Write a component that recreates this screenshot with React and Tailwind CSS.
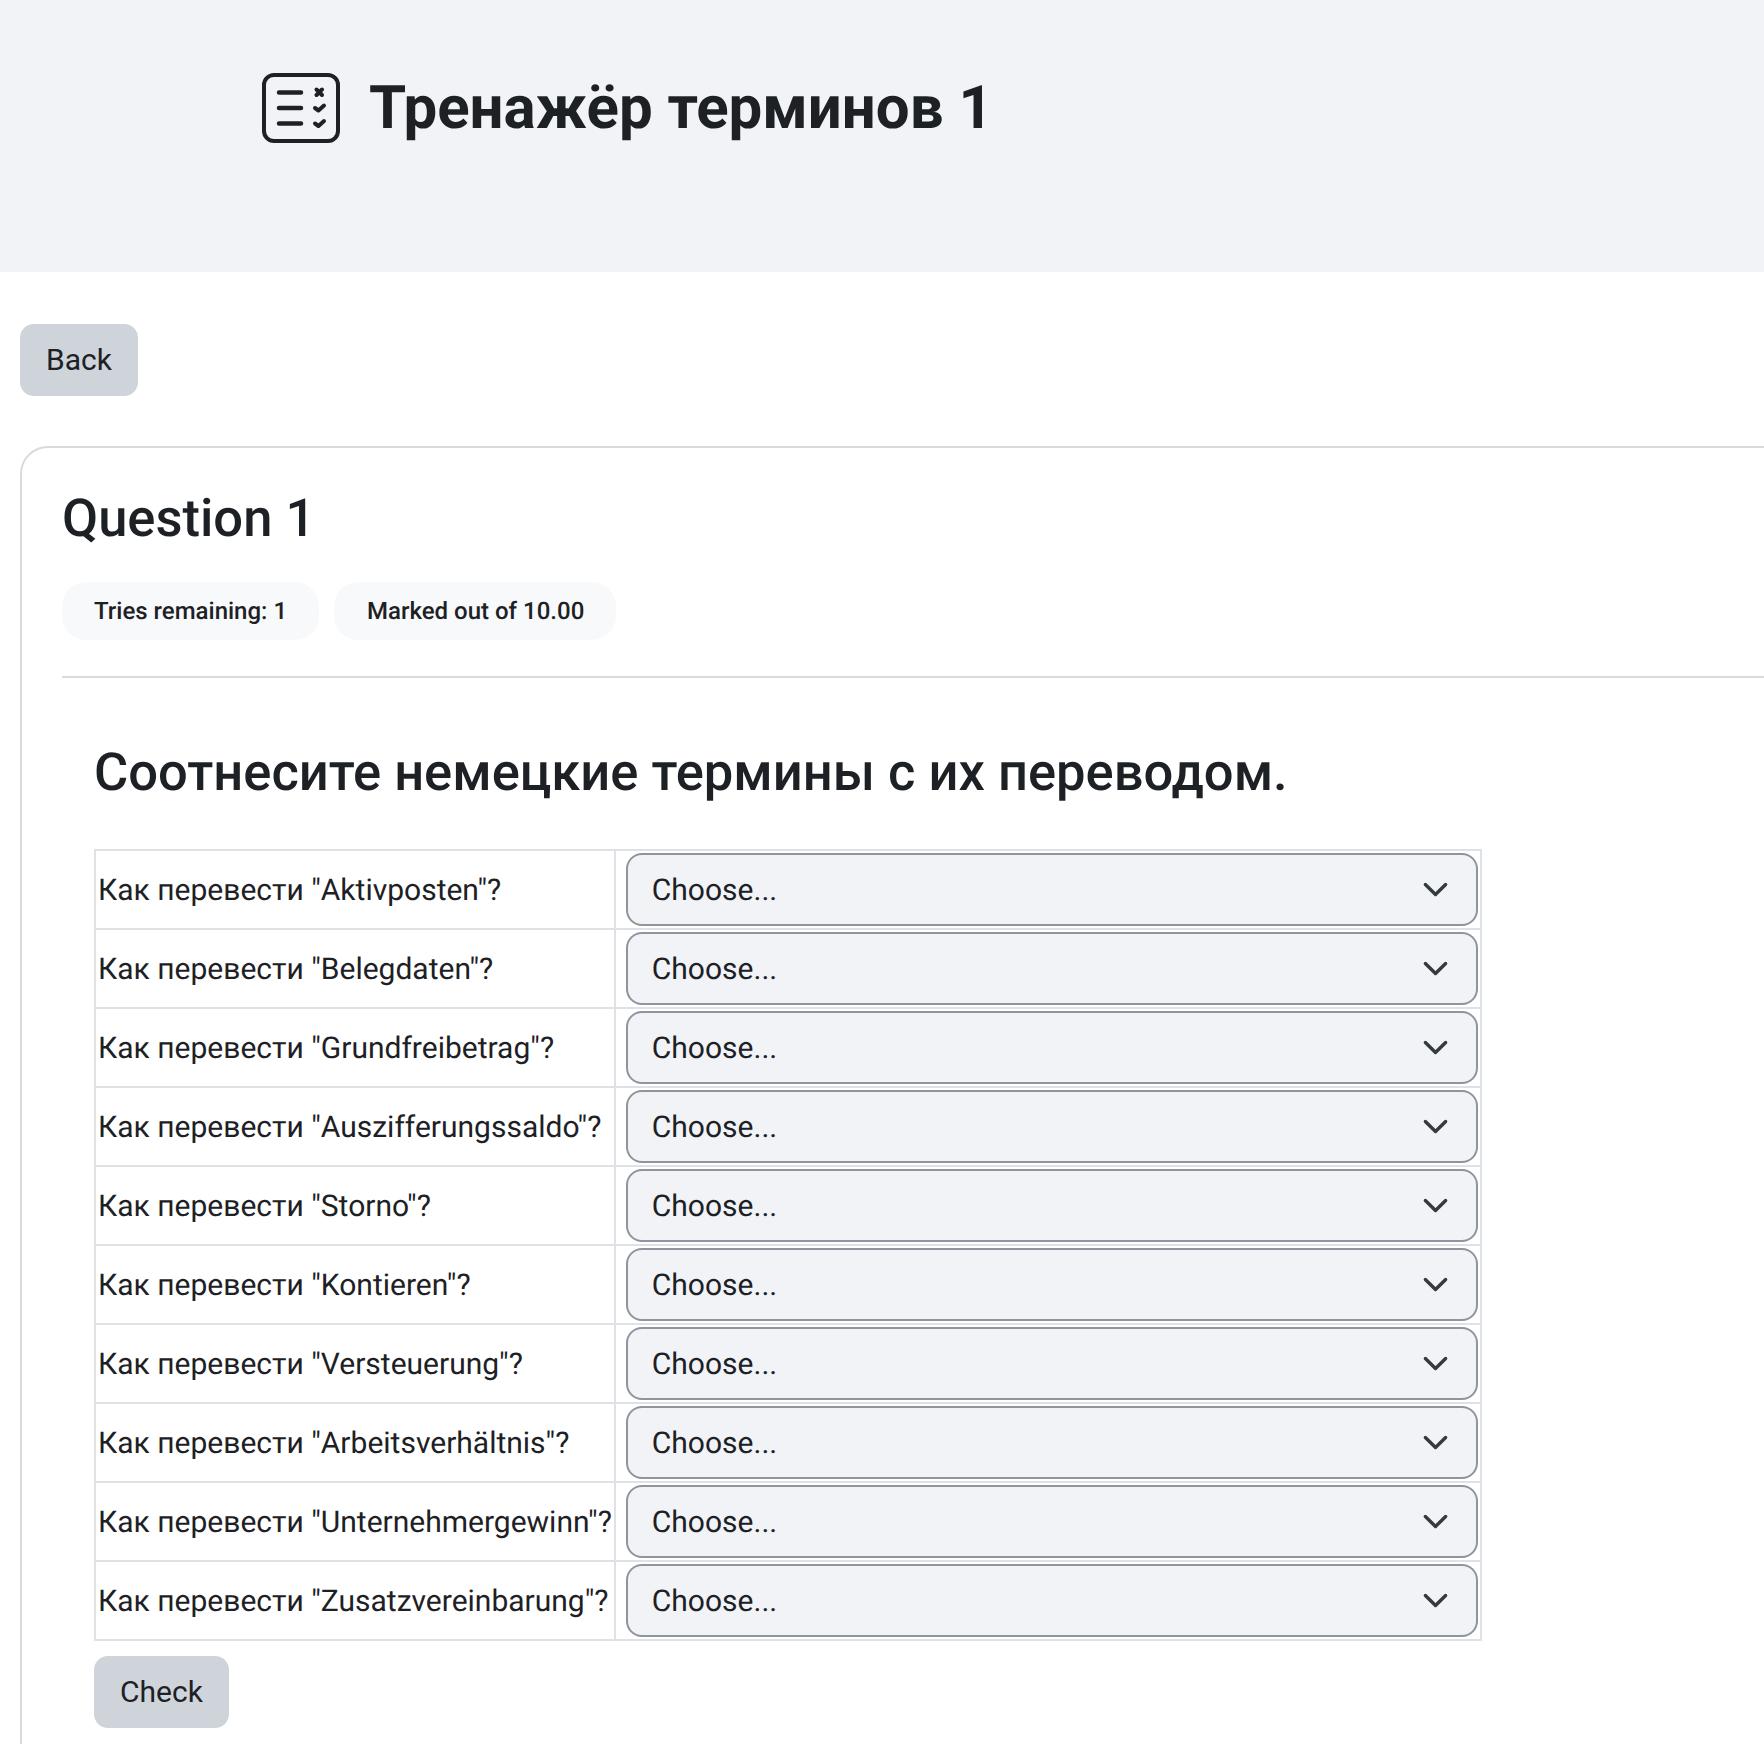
import React from 'react';

const terms = [
  'Aktivposten',
  'Belegdaten',
  'Grundfreibetrag',
  'Auszifferungssaldo',
  'Storno',
  'Kontieren',
  'Versteuerung',
  'Arbeitsverhältnis',
  'Unternehmergewinn',
  'Zusatzvereinbarung',
];

const QuizIcon = () => (
  <svg width="78" height="70" viewBox="0 0 78 70" fill="none" stroke="#1d2125" strokeLinecap="round" strokeLinejoin="round">
    <rect x="2" y="2" width="74" height="66" rx="10" strokeWidth="4" />
    <path d="M17 19.500h22M17 35h22M17 50.500h22" strokeWidth="4.500" />
    <path d="M54.500 16.500l5.500 5.500M60 16.500l-5.500 5.500" strokeWidth="4" />
    <path d="M53 35l3.500 2.500 5.500-5M53 50.500l3.500 2.500 5.500-5" strokeWidth="4" />
  </svg>
);

const Chevron = () => (
  <svg className="mt-[1px]" width="27" height="27" viewBox="0 0 16 16" fill="none" stroke="#343a40" strokeWidth="2" strokeLinecap="round" strokeLinejoin="round">
    <path d="m2 5 6 6 6-6" />
  </svg>
);

const Btn = ({ children }) => (
  <button className="h-[72px] px-[26px] pb-[2px] rounded-[14px] bg-[#ced4da] text-[30px] text-[#1d2125]">{children}</button>
);

export default function App() {
  return (
    <div className="h-[1744px] w-[1764px] overflow-hidden bg-white text-[#1d2125] font-['Roboto',sans-serif] [text-rendering:geometricPrecision]">
      <header className="h-[272px] bg-[#f1f3f7] pl-[262px] pt-[73px]">
        <div className="flex items-center gap-[29px]">
          <QuizIcon />
          <h1 className="text-[60px] font-bold leading-none">Тренажёр терминов 1</h1>
        </div>
      </header>

      <div className="pl-[20px] pt-[52px]">
        <Btn>Back</Btn>

        <section className="mt-[50px] w-[1800px] min-h-[1400px] border-2 border-[#d9dadc] rounded-tl-[28px] pl-[40px] pt-[37px]">
          <h2 className="text-[52.500px] font-medium leading-[66px]">Question 1</h2>
          <div className="mt-[31px] flex gap-[15px]">
            <span className="h-[58px] px-[32px] rounded-[24px] bg-[#f8f9fa] flex items-center text-[24px] font-medium">Tries remaining: 1</span>
            <span className="h-[58px] pl-[33px] pr-[32px] rounded-[24px] bg-[#f8f9fa] flex items-center text-[24px] font-medium">Marked out of 10.00</span>
          </div>
          <div className="mt-[36px] border-t-2 border-[#d9dadc]"></div>

          <div className="pl-[32px]">
            <h3 className="mt-[61px] text-[52.500px] font-medium leading-[66px]">Соотнесите немецкие термины с их переводом.</h3>

            <table className="mt-[44px] w-[1388px] border-collapse border-2 border-[#dee2e6] text-[30px]">
              <tbody>
                {terms.map((term) => (
                  <tr key={term} className="h-[79px]">
                    <td className="w-[519px] border-2 border-[#dee2e6] px-[2px] pt-[2px] whitespace-nowrap">Как перевести "{term}"?</td>
                    <td className="border-2 border-[#dee2e6] pl-[10px] pr-[2px]">
                      <div className="h-[73px] mb-[1px] rounded-[16px] border-2 border-[#8f959e] bg-[#f1f3f7] pl-[24px] pr-[27px] flex items-center justify-between">
                        <span className="pt-[3px]">Choose...</span>
                        <Chevron />
                      </div>
                    </td>
                  </tr>
                ))}
              </tbody>
            </table>

            <div className="mt-[15px]">
              <Btn>Check</Btn>
            </div>
          </div>
        </section>
      </div>
    </div>
  );
}
